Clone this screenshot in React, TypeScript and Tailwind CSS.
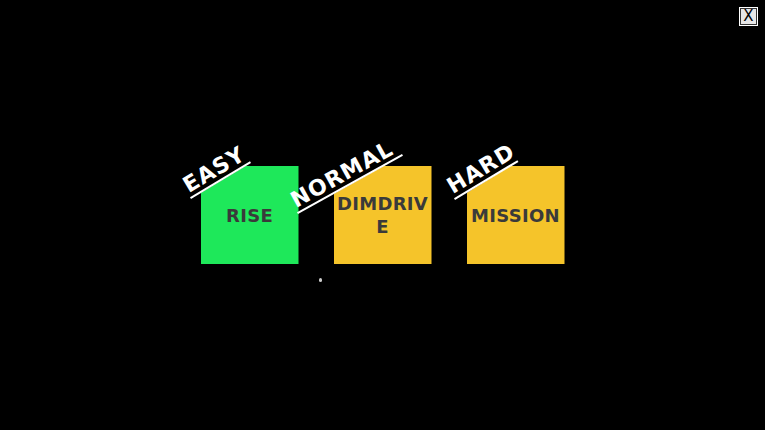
import React from 'react';

const levels = [
  {
    label: 'EASY',
    name: 'RISE',
    box: 'bg-[#1ee85a] [clip-path:polygon(0_27px,45px_0,100%_0,100%_100%,0_100%)]',
    tag: 'left-[-10px] top-[33px] w-[70px] -rotate-[31deg]',
  },
  {
    label: 'NORMAL',
    name: 'DIMDRIVE',
    box: 'bg-[#f5c42a] [clip-path:polygon(0_28px,50px_0,100%_0,100%_100%,0_100%)]',
    tag: 'left-[-36px] top-[48px] w-[120px] -rotate-[29deg]',
  },
  {
    label: 'HARD',
    name: 'MISSION',
    box: 'bg-[#f5c42a] [clip-path:polygon(0_27px,44px_0,100%_0,100%_100%,0_100%)]',
    tag: 'left-[-12px] top-[34px] w-[74px] -rotate-[31deg]',
  },
];

export default function App() {
  return (
    <div className="relative w-[765px] h-[430px] bg-black overflow-hidden flex items-center justify-center font-['DejaVu_Sans',sans-serif]">
      <button className="absolute top-[7px] right-[7px] w-[19px] h-[19px] bg-[#e6e6e6] border border-white outline outline-1 outline-[#333] -outline-offset-2 flex items-center justify-center text-black text-[15px] leading-none">
        X
      </button>

      <div className="flex gap-[35px]">
        {levels.map((l) => (
          <div key={l.name} className="relative w-[98px] h-[98px]">
            <div className={`w-full h-full ${l.box} flex items-center justify-center text-center`}>
              <span className="text-[#3a3a3a] text-[18px] font-bold tracking-[0.3px] leading-[23px] break-all">{l.name}</span>
            </div>
            <div
              className={`absolute ${l.tag} -translate-y-full origin-bottom-left border-b-2 border-white text-white text-[22px] font-bold tracking-[1px] leading-[22px] whitespace-nowrap pl-[1px]`}
            >
              {l.label}
            </div>
          </div>
        ))}
      </div>

      <div className="absolute left-[319px] top-[278px] w-[3px] h-[4px] rounded-full bg-[#ccc]" />
    </div>
  );
}
